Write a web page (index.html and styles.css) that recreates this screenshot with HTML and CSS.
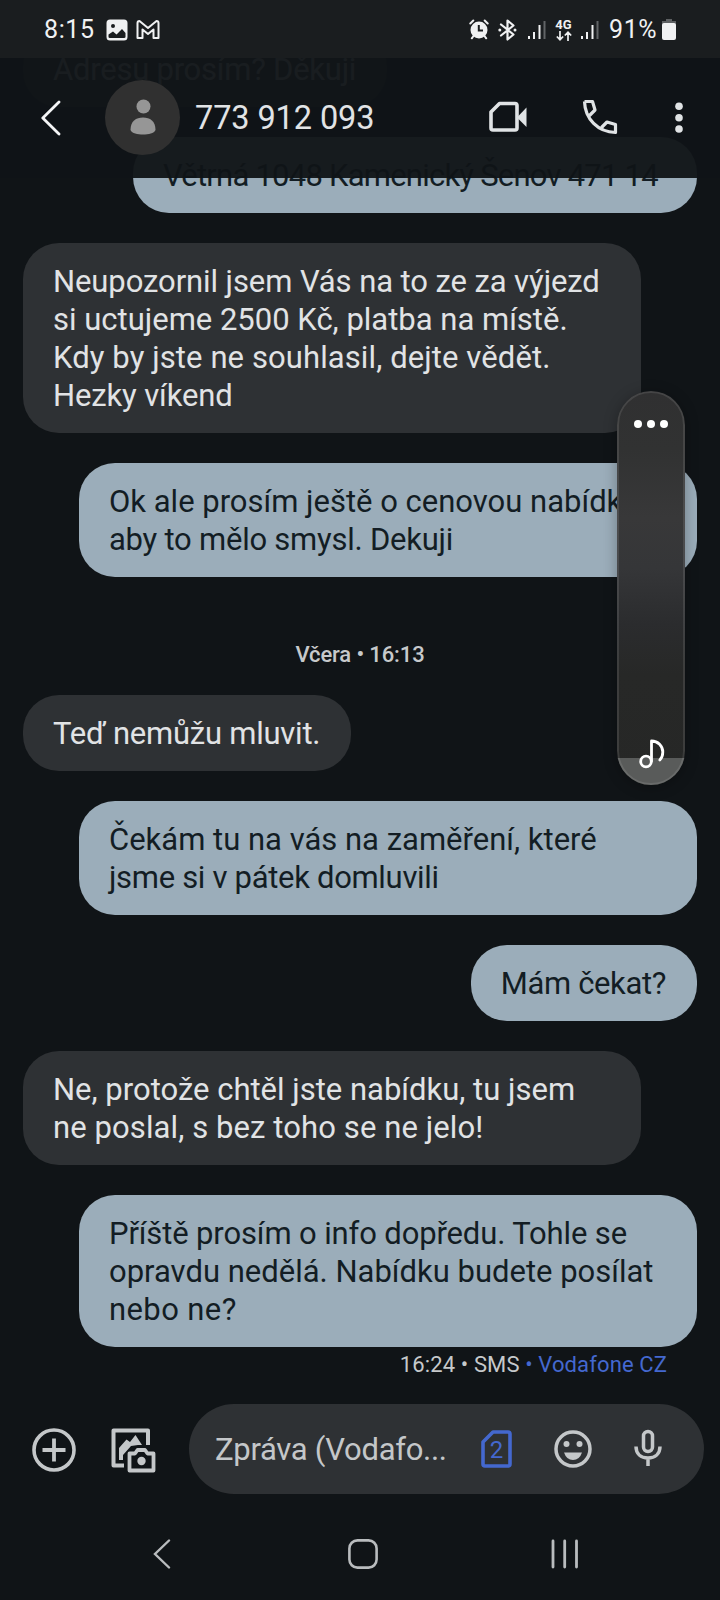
FILE: index.html
```
<!DOCTYPE html>
<html lang="cs">
<head>
<meta charset="utf-8">
<title>773 912 093</title>
<link rel="stylesheet" href="styles.css">
</head>
<body>
<div class="phone">
  <div class="top">
    <div class="status">
      <span class="clock">8:15</span>
      <svg class="s-photo" width="22" height="22" viewBox="0 0 22 22"><path fill="#f0f1f2" fill-rule="evenodd" d="M4 .5H18Q21.500 .5 21.500 4V18Q21.500 21.500 18 21.500H4Q.5 21.500 .5 18V4Q.5 .5 4 .5ZM2.500 15.500V18Q2.500 19 4 19H18Q19.500 19 19.500 18V14L16 10L10.500 15.500L7 12.500ZM7 5A2 2 0 1 0 7 9A2 2 0 1 0 7 5Z"/></svg>
      <svg class="s-mail" width="24" height="20" viewBox="0 0 24 20"><path fill="none" stroke="#f0f1f2" stroke-width="2" stroke-linejoin="round" d="M1.500 3Q1.500 1 3.500 1L12 8L20.500 1Q22.500 1 22.500 3V18H17.500V9.500L12 14L6.500 9.500V18H1.500Z"/></svg>
      <span class="grow"></span>
      <svg class="s-alarm" width="20" height="21" viewBox="0 0 20 21"><g stroke="#f0f1f2" stroke-width="2" stroke-linecap="round"><path d="M1.300 4.500L4.300 1.500M18.700 4.500L15.700 1.500M4.500 17L2.800 19.300M15.500 17L17.200 19.300"/></g><circle cx="10" cy="11" r="8.500" fill="#f0f1f2"/><path d="M9.800 6V11.500H14" fill="none" stroke="#1a1d1f" stroke-width="2"/></svg>
      <svg class="s-bt" width="19" height="22" viewBox="0 0 19 22"><path fill="none" stroke="#f0f1f2" stroke-width="2.200" stroke-linejoin="round" stroke-linecap="round" d="M3 5.500L15.500 15.500L9.500 20.500V1.500L15.500 6.500L3 16.500"/><circle cx="1.800" cy="11" r="1.500" fill="#f0f1f2"/><circle cx="17" cy="11" r="1.500" fill="#f0f1f2"/></svg>
      <svg class="s-sig" width="18" height="20" viewBox="0 0 18 20"><path fill="#f0f1f2" d="M0 16h2v3H0zM5 12h2v7H5zM10.500 5h2v14h-2z"/><path fill="#616466" d="M15.500 1h2v18h-2z"/></svg>
      <span class="net"><b>4G</b><svg width="16" height="10" viewBox="0 0 16 10"><path fill="none" stroke="#f0f1f2" stroke-width="1.700" d="M4 0V9M.8 5.500L4 8.700L7.200 5.500M12 10V1M8.800 4.500L12 1.300L15.200 4.500"/></svg></span>
      <svg class="s-sig s-sig2" width="18" height="20" viewBox="0 0 18 20"><path fill="#f0f1f2" d="M0 16h2v3H0zM5 12h2v7H5zM10.500 5h2v14h-2z"/><path fill="#616466" d="M15.500 1h2v18h-2z"/></svg>
      <span class="clock pct">91%</span>
      <svg class="s-batt" width="14" height="21" viewBox="0 0 14 21"><path fill="#5d6062" d="M4 0h6v2h4v4H0V2h4z"/><rect y="4" width="14" height="17" rx="2" fill="#f0f1f2"/></svg>
    </div>
    <div class="bar">
      <svg class="back" width="20" height="36" viewBox="0 0 20 36"><path fill="none" stroke="#f4f5f6" stroke-width="2.800" stroke-linecap="round" stroke-linejoin="round" d="M18 2L1.800 18L18 34"/></svg>
      <div class="avatar"><svg width="26" height="36" viewBox="0 0 26 36"><circle cx="13.500" cy="7.500" r="7" fill="#969696"/><path fill="#969696" d="M.5 31C.5 22 6 18.500 13 18.500S25.500 22 25.500 31C24 34.500 18.500 35.500 13 35.500S2 34.500 .5 31Z"/></svg></div>
      <h1 class="name">773 912 093</h1>
      <span class="grow"></span>
      <svg class="video" width="38" height="32" viewBox="0 0 38 32"><path fill="none" stroke="#e0e3e5" stroke-width="3.600" stroke-linejoin="round" d="M10.500 2.500H26Q28 2.500 28 4.500V27Q28 29 26 29H4Q2 29 2 27V11Z"/><path fill="#e0e3e5" d="M28 16.500L37.500 6.500V26Z"/></svg>
      <svg class="call" width="36" height="36" viewBox="0 0 36 36"><path fill="none" stroke="#e0e3e5" stroke-width="3.200" stroke-linejoin="round" d="M2.500 2.500H10.500L13 11L7.500 16.500M19.500 28.500L25 23L33.500 25.500V33.500C16 33 3 20 2.500 2.500"/></svg>
      <svg class="more" width="8" height="32" viewBox="0 0 8 32"><g fill="#e0e3e5"><circle cx="4" cy="4.200" r="3.800"/><circle cx="4" cy="15.700" r="3.800"/><circle cx="4" cy="27" r="3.800"/></g></svg>
    </div>
  </div>

  <main class="thread">
    <p class="msg in"><span class="dn2">Adresu prosím? Děkuji</span></p>
    <p class="msg out address"><span class="dn8">Větrná 1048 Kamenický Šenov 471 14</span></p>
    <p class="msg in wide"><span class="dn0">Neupozornil jsem Vás na to ze za výjezd</span><span>si uctujeme 2500 Kč, platba na místě.</span><span class="up1">Kdy by jste ne souhlasil, dejte vědět.</span><span class="dn1">Hezky víkend</span></p>
    <p class="msg out wide"><span>Ok ale prosím ještě o cenovou nabídku,</span><span class="dn2">aby to mělo smysl. Dekuji</span></p>
    <time class="date">Včera • 16:13</time>
    <p class="msg in"><span class="dn2">Teď nemůžu mluvit.</span></p>
    <p class="msg out wide"><span>Čekám tu na vás na zaměření, které</span><span class="dn3">jsme si v pátek domluvili</span></p>
    <p class="msg out"><span class="dn4">Mám čekat?</span></p>
    <p class="msg in wide"><span>Ne, protože chtěl jste nabídku, tu jsem</span><span class="up1">ne poslal, s bez toho se ne jelo!</span></p>
    <p class="msg out wide last"><span class="dn1">Příště prosím o info dopředu. Tohle se</span><span>opravdu nedělá. Nabídku budete posílat</span><span class="up4">nebo ne?</span></p>
    <p class="meta"><span class="when">16:24 • SMS</span> <span class="sim-name">• Vodafone CZ</span></p>
  </main>

  <div class="compose">
    <svg class="plus" width="44" height="44" viewBox="0 0 44 44"><circle cx="22" cy="22" r="20" fill="none" stroke="#c4c7c9" stroke-width="3.600"/><path stroke="#c4c7c9" stroke-width="3.800" d="M22 10.500V33.500M10.500 22H33.500"/></svg>
    <svg class="gallery" width="45" height="45" viewBox="0 0 45 45"><path fill="none" stroke="#c4c7c9" stroke-width="4" stroke-linejoin="round" d="M37 17V2.500H2.500V37.500H13"/><path fill="#c4c7c9" d="M8 32V20L15.500 11.500L19 14L24.500 7L31 17H27L20 18L12 27V32Z"/><path fill="none" stroke="#c4c7c9" stroke-width="3.800" stroke-linejoin="round" d="M18.500 25.500H24L26.500 22H34L36.500 25.500H42.500V42.500H18.500Z"/><circle cx="30.500" cy="33" r="4.200" fill="#c4c7c9"/></svg>
    <div class="field">
      <span class="hint">Zpráva (Vodafo...</span>
      <div class="sim"><svg width="31" height="38" viewBox="0 0 31 38"><path fill="none" stroke="#4468cf" stroke-width="3.600" stroke-linejoin="round" d="M12 2H27Q29 2 29 4V34Q29 36 27 36H4Q2 36 2 34V12Z"/></svg><span class="sim-no">2</span></div>
      <svg class="smile" width="38" height="38" viewBox="0 0 38 38"><circle cx="19" cy="19" r="17" fill="none" stroke="#c4c7c9" stroke-width="3.500"/><circle cx="12.500" cy="14" r="3" fill="#c4c7c9"/><circle cx="25.500" cy="14" r="3" fill="#c4c7c9"/><path fill="#c4c7c9" d="M10 22.500H28Q25.500 30 19 30T10 22.500Z"/></svg>
      <svg class="mic" width="28" height="38" viewBox="0 0 28 38"><g fill="none" stroke="#c4c7c9" stroke-width="3.500"><rect x="9.500" y="2.500" width="9" height="20" rx="4.500"/><path d="M2 17.500C2 25 7 29 14 29S26 25 26 17.500M14 29V37"/></g></svg>
    </div>
  </div>

  <nav class="nav">
    <svg width="18" height="30" viewBox="0 0 18 30"><path fill="none" stroke="#b9bcbe" stroke-width="2.400" stroke-linecap="round" d="M16 1.500L2 15L16 28.500"/></svg>
    <svg class="home" width="30" height="30" viewBox="0 0 30 30"><rect x="1.400" y="1.400" width="27.200" height="27.200" rx="8" fill="none" stroke="#b9bcbe" stroke-width="2.600"/></svg>
    <svg width="28" height="30" viewBox="0 0 28 30"><path stroke="#b9bcbe" stroke-width="2.800" stroke-linecap="round" d="M2 2V28M13.700 2V28M25.500 2V28"/></svg>
  </nav>

  <aside class="volume">
    <svg class="dots" width="36" height="10" viewBox="0 0 36 10"><g fill="#fff"><circle cx="5" cy="5" r="4"/><circle cx="18" cy="5" r="4"/><circle cx="31" cy="5" r="4"/></g></svg>
    <div class="level"><svg class="note" width="26" height="30" viewBox="0 0 26 30"><g fill="none" stroke="#fff" stroke-width="2.800" stroke-linecap="round" stroke-linejoin="round"><circle cx="7" cy="22.500" r="5.300"/><path d="M12.500 22V2C19 2 23.800 7 23.800 13Q23.800 18 20.800 21"/></g></svg></div>
  </aside>
</div>
</body>
</html>
```
FILE: styles.css
```
* { box-sizing: border-box; }
body { margin: 0; background: #101417; }
svg { display: block; flex: none; }
.phone {
  position: relative;
  width: 720px;
  height: 1600px;
  overflow: hidden;
  display: flex;
  flex-direction: column;
  background: #101417;
  font-family: Roboto, "Noto Sans", sans-serif;
  color: #e1e3e5;
}
.grow { flex: 1; }

/* Translucent header lying over the scrolled messages */
.top {
  position: absolute;
  top: 0;
  left: 0;
  z-index: 2;
  width: 720px;
  height: 178px;
  background: rgba(16, 20, 23, .955);
}
.status {
  display: flex;
  align-items: center;
  height: 58px;
  padding: 1px 44px 0 44px;
  background: #1a1d1f;
  color: #f0f1f2;
}
.clock { font-size: 25px; line-height: 30px; letter-spacing: .6px; white-space: nowrap; }
.s-photo { margin-left: 11px; }
.s-mail { margin-left: 8px; }
.s-alarm { margin-right: 9px; }
.s-bt { margin-right: 11px; }
.s-sig { margin-right: 9px; }
.s-sig2 { margin-right: 10px; }
.net { display: flex; flex-direction: column; align-items: center; width: 17px; margin-right: 9px; }
.net b { font-size: 13px; line-height: 12px; font-weight: 700; }
.pct { width: 48px; margin-right: 5px; }

.bar { display: flex; align-items: center; height: 120px; padding: 0 37px 0 41px; }
.back { margin-right: 44px; }
.avatar {
  display: flex;
  align-items: center;
  justify-content: center;
  width: 75px;
  height: 75px;
  margin-bottom: 2px;
  border-radius: 50%;
  background: #303030;
}
.name { margin: 0 0 0 15px; font-size: 32.5px; line-height: 40px; font-weight: 400; letter-spacing: -.1px; }
.video { margin: 0 55px 2px 0; }
.call { margin: 0 57px 2px 0; }

.thread { display: flex; flex-direction: column; height: 1404px; padding: 31px 23px 0; }
.msg {
  flex: none;
  align-self: flex-start;
  margin: 0 0 30px;
  padding: 20px 31px 18px 30px;
  border-radius: 36px;
  font-size: 31px;
  line-height: 38px;
  white-space: nowrap;
}
.msg span { display: block; }
.in { background: #2e3134; }
.out { align-self: flex-end; background: #9badba; color: #131d24; }
.wide { width: 618px; }
.address { width: 564px; }
.last { margin-bottom: 0; }

/* Tracking steps that keep each line at its set width */
.dn0 { letter-spacing: -.09px; }
.dn1 { letter-spacing: -.13px; }
.dn2 { letter-spacing: -.24px; }
.dn3 { letter-spacing: -.31px; }
.dn4 { letter-spacing: -.37px; }
.dn8 { letter-spacing: -.77px; }
.up1 { letter-spacing: .1px; }
.up4 { letter-spacing: .4px; }

.date {
  margin: 33px 0 25px;
  font-size: 22px;
  line-height: 30px;
  font-weight: 500;
  letter-spacing: -.12px;
  text-align: center;
  color: #c6c9cb;
}
.meta { margin: 3px 30px 0 0; font-size: 22px; line-height: 30px; letter-spacing: .12px; text-align: right; color: #c6c9cb; }
.sim-name { color: #4468cf; }

.compose { display: flex; align-items: center; height: 90px; padding: 0 16px 0 32px; }
.plus { margin-top: 2px; }
.gallery { margin: 2px 33px 0 35px; }
.field {
  flex: 1;
  display: flex;
  align-items: center;
  height: 90px;
  padding: 0 41px 0 26px;
  border-radius: 45px;
  background: #2e3134;
}
.hint { width: 266px; margin-top: 1px; font-size: 31px; letter-spacing: -.3px; color: #c4c7c9; white-space: nowrap; }
.sim { display: grid; place-items: center; margin-right: 42px; }
.sim svg, .sim-no { grid-area: 1 / 1; }
.sim-no { padding-top: 2px; font-size: 24px; line-height: 28px; color: #4468cf; }
.smile { margin-right: 42px; }
.mic { margin-bottom: 3px; }

.nav { display: flex; align-items: center; height: 106px; padding: 14px 141px 0 153px; justify-content: space-between; }
.home { margin-left: 3px; }

/* System volume slider floating above the conversation */
.volume {
  position: absolute;
  left: 617px;
  top: 391px;
  z-index: 3;
  display: flex;
  flex-direction: column;
  align-items: center;
  justify-content: space-between;
  width: 68px;
  height: 394px;
  padding-top: 28px;
  overflow: hidden;
  border-radius: 34px;
  background: linear-gradient(#303031 0, #313232 15%, #383839 32%, #353638 45%, #2b2c2e 59%, #272827 72%, #262726 100%);
  box-shadow: 0 2px 14px rgba(0, 0, 0, .28);
}
.volume::after { content: ""; position: absolute; inset: 0; border: 2px solid rgba(255, 255, 255, .1); border-radius: 34px; }
.level { display: flex; justify-content: center; width: 68px; height: 27px; background: #595b5a; }
.note { margin: -19px 0 0 2px; }
```
